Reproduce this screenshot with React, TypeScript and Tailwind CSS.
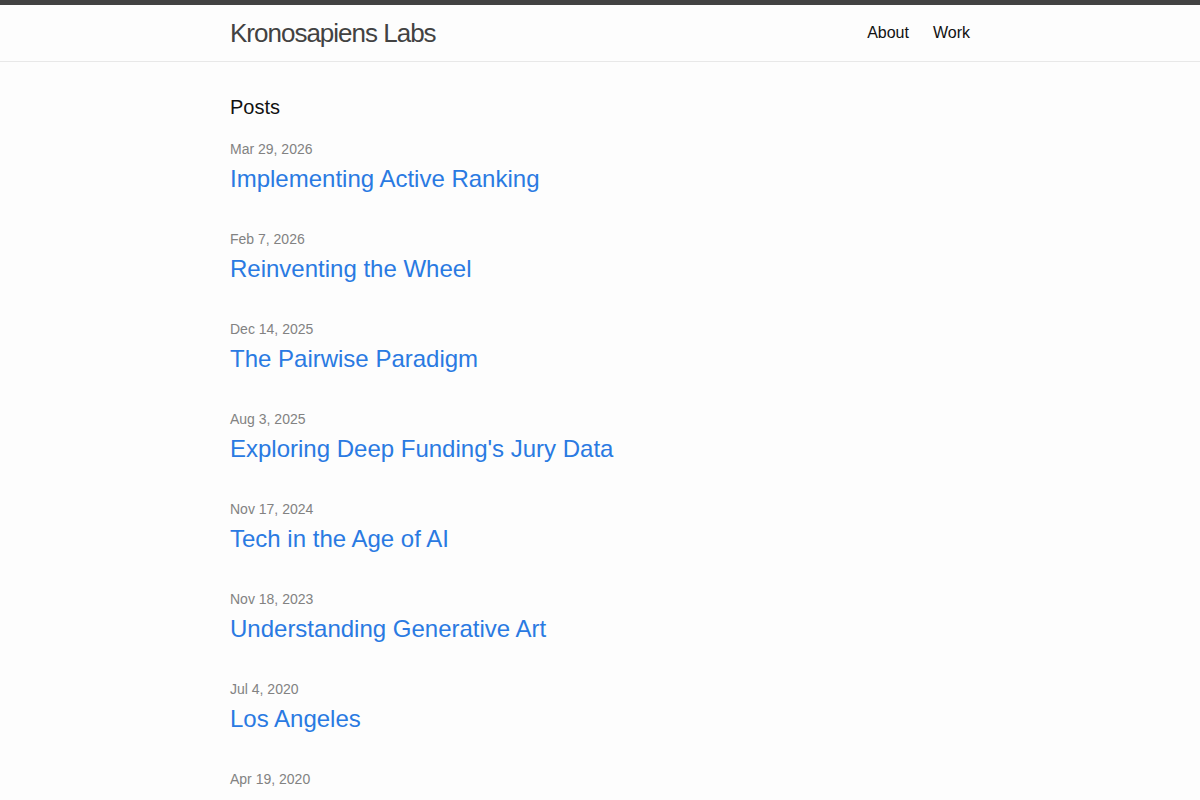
const posts = [
  { date: "Mar 29, 2026", title: "Implementing Active Ranking" },
  { date: "Feb 7, 2026", title: "Reinventing the Wheel" },
  { date: "Dec 14, 2025", title: "The Pairwise Paradigm" },
  { date: "Aug 3, 2025", title: "Exploring Deep Funding's Jury Data" },
  { date: "Nov 17, 2024", title: "Tech in the Age of AI" },
  { date: "Nov 18, 2023", title: "Understanding Generative Art" },
  { date: "Jul 4, 2020", title: "Los Angeles" },
  { date: "Apr 19, 2020", title: "" },
];

export default function App() {
  return (
    <div
      className="min-h-screen bg-[#fdfdfd] text-[#111] text-[16px] leading-[1.5]"
      style={{ fontFamily: '"Liberation Sans", Helvetica, Arial, sans-serif' }}
    >
      <header className="border-t-[5px] border-b border-t-[#424242] border-b-[#e8e8e8] min-h-[56px]">
        <div className="mx-auto max-w-[800px] px-[30px] flex items-center justify-between h-[56px]">
          <a href="#" className="text-[26px] font-light tracking-[-1px] text-[#424242] leading-[54px]">
            Kronosapiens Labs
          </a>
          <nav className="flex gap-[24px] leading-[54px]">
            <a href="#" className="text-[#111]">About</a>
            <a href="#" className="text-[#111]">Work</a>
          </nav>
        </div>
      </header>

      <main className="mx-auto max-w-[800px] px-[30px] pt-[30px]">
        <h2 className="text-[20px] leading-[30px] mb-[17px]">Posts</h2>
        <ul>
          {posts.map((p) => (
            <li key={p.date} className="mb-[32px]">
              <span className="block text-[14px] leading-[21px] text-[#828282]">{p.date}</span>
              {p.title ? (
                <h3 className="text-[24px] leading-[36px] mt-[1px]">
                  <a href="#" className="text-[#2a7ae2]">{p.title}</a>
                </h3>
              ) : null}
            </li>
          ))}
        </ul>
      </main>
    </div>
  );
}
